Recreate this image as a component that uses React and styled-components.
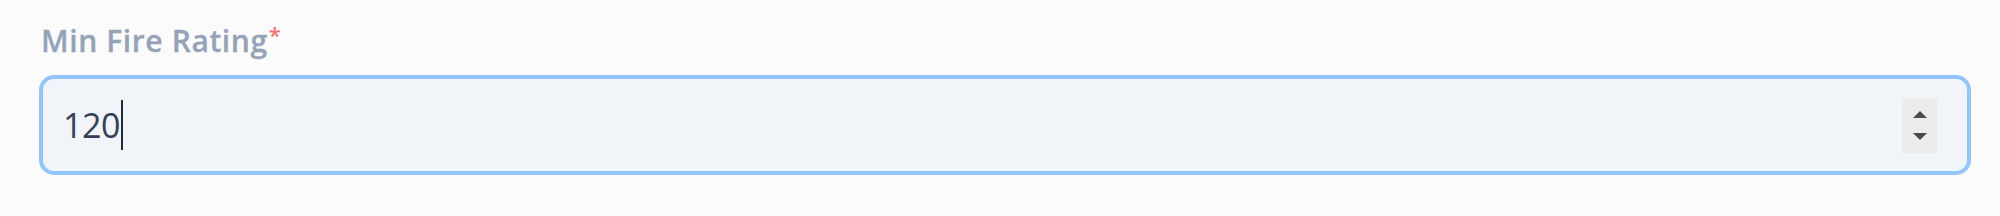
import React from "react";
import styled, { createGlobalStyle } from "styled-components";

const Global = createGlobalStyle`
  html, body {
    margin: 0;
    padding: 0;
    background: #fbfbfb;
    font-family: "Open Sans", "Noto Sans", sans-serif;
  }
`;

const Page = styled.div`
  width: 2000px;
  height: 216px;
  box-sizing: border-box;
  padding: 21px 29px 0 39px;
  background: #fbfbfb;
`;

const Label = styled.label`
  display: block;
  padding-left: 2px;
  font-size: 30px;
  font-weight: 600;
  line-height: 40px;
  color: #94a3b8;
  letter-spacing: 0.6px;
  -webkit-text-stroke: 0.3px #94a3b8;
`;

const Required = styled.sup`
  color: #f87171;
  font-size: 22px;
  line-height: 0;
  margin-left: 1px;
  vertical-align: 9px;
  -webkit-text-stroke: 0;
`;

const Field = styled.div`
  margin-top: 14px;
  height: 100px;
  box-sizing: border-box;
  display: flex;
  align-items: center;
  padding: 0 30px 0 20px;
  border: 4px solid #93c5fd;
  border-radius: 15px;
  background: #f1f5f9;
`;

const Value = styled.span`
  font-size: 34px;
  color: #334155;
  line-height: 1;
  letter-spacing: -0.4px;
`;

const Caret = styled.span`
  display: inline-block;
  width: 2px;
  height: 50px;
  margin-left: 1px;
  background: #1e293b;
`;

const Spinner = styled.div`
  margin-left: auto;
  width: 35px;
  height: 55px;
  display: flex;
  flex-direction: column;
  align-items: center;
  justify-content: center;
  gap: 15px;
  background: #ececec;
`;

const Arrow = styled.span`
  width: 0;
  height: 0;
  border-left: 7px solid transparent;
  border-right: 7px solid transparent;
  ${({ $down }) =>
    $down
      ? "border-top: 7px solid #4a4a4a;"
      : "border-bottom: 7px solid #4a4a4a;"}
`;

export default function App() {
  return (
    <>
      <Global />
      <Page>
        <Label>
          Min Fire Rating<Required>*</Required>
        </Label>
        <Field>
          <Value>120</Value>
          <Caret />
          <Spinner>
            <Arrow />
            <Arrow $down />
          </Spinner>
        </Field>
      </Page>
    </>
  );
}
